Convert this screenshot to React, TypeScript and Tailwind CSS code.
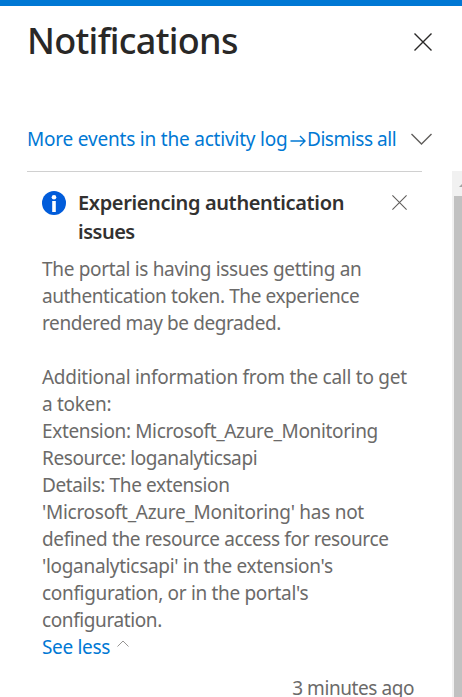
import { useState } from 'react';
import clsx from 'clsx';

interface TextLine {
  text: string;
  tracking: string;
}

const LINES: TextLine[] = [
  { text: 'The portal is having issues getting an', tracking: 'tracking-[-0.33px]' },
  { text: 'authentication token. The experience', tracking: 'tracking-[-0.4px]' },
  { text: 'rendered may be degraded.', tracking: 'tracking-[-0.4px]' },
  { text: '', tracking: '' },
  { text: 'Additional information from the call to get', tracking: 'tracking-[-0.27px]' },
  { text: 'a token:', tracking: 'tracking-[-0.3px]' },
  { text: 'Extension: Microsoft_Azure_Monitoring', tracking: 'tracking-[-0.36px]' },
  { text: 'Resource: loganalyticsapi', tracking: 'tracking-[-0.4px]' },
  { text: 'Details: The extension', tracking: 'tracking-[-0.38px]' },
  { text: "'Microsoft_Azure_Monitoring' has not", tracking: 'tracking-[-0.28px]' },
  { text: 'defined the resource access for resource', tracking: 'tracking-[-0.37px]' },
  { text: "'loganalyticsapi' in the extension's", tracking: 'tracking-[-0.31px]' },
  { text: "configuration, or in the portal's", tracking: 'tracking-[-0.32px]' },
  { text: 'configuration.', tracking: 'tracking-[-0.4px]' },
];

const CloseIcon = ({ className }: { className: string }) => (
  <svg viewBox="0 0 18 18" fill="none" stroke="currentColor" className={className}>
    <path d="M.5.5l17 17M17.5.5l-17 17" />
  </svg>
);

const Header = () => (
  <header className="flex h-[66px] items-start justify-between pt-[7px] pr-[30px] pl-[27px]">
    <h1 className="text-[36px] leading-[56px] font-medium tracking-[-0.7px] whitespace-nowrap text-[#292827]">
      Notifications
    </h1>
    <button type="button" aria-label="Close" className="mt-5">
      <CloseIcon className="size-[18px] stroke-[1.4] text-[#292827]" />
    </button>
  </header>
);

const Toolbar = () => (
  <div className="mt-[51px] flex h-8 items-center pl-[27px] text-[19px] whitespace-nowrap text-[#0078d4]">
    <a href="#" className="w-[263px] tracking-[-0.2px]">More events in the activity log</a>
    <svg width="16" height="12" viewBox="0 0 16 12" fill="none" stroke="currentColor" strokeWidth="1.4" className="mt-1">
      <path d="M.5 6h14.5M10 1l5 5-5 5" />
    </svg>
    <a href="#" className="ml-px w-[105px] tracking-[-0.45px]">Dismiss all</a>
    <svg width="21" height="12" viewBox="0 0 21 12" fill="none" stroke="#605e5c" strokeWidth="1.4" className="-ml-px">
      <path d="M.5 1l10 10 10-10" />
    </svg>
  </div>
);

const InfoIcon = () => (
  <svg width="24" height="24" viewBox="0 0 24 24" className="mt-[3px] shrink-0">
    <circle cx="12" cy="12" r="12" fill="#015cda" />
    <circle cx="12" cy="6.2" r="2.3" fill="#fff" />
    <path d="M10.2 10h3.6v11h-3.6z" fill="#fff" />
  </svg>
);

const App = () => {
  const [expanded, setExpanded] = useState(true);

  return (
    <main className="h-[697px] w-[462px] overflow-hidden border-t-[6px] border-[#0078d4] bg-white font-['Noto_Sans','Open_Sans',sans-serif]">
      <Header />
      <Toolbar />
      <div className="mt-4 flex h-[526px]">
        <div className="ml-[27px] w-[395px] border-t border-[#d0d0d0] pl-[15px]">
          <div className="flex h-[84px] items-start pt-4">
            <InfoIcon />
            <h2 className="ml-3 w-[314px] text-[20px] leading-[29px] font-semibold whitespace-nowrap text-[#323130]">
              <span className="block tracking-[-0.36px]">Experiencing authentication</span>
              <span className="block tracking-[-0.5px]">issues</span>
            </h2>
            <button type="button" aria-label="Dismiss" className="mt-[7px] shrink-0">
              <CloseIcon className="size-[15px] stroke-[1.3] text-[#605e5c]" />
            </button>
          </div>
          <div className="text-[19px] leading-[27px] whitespace-nowrap text-[#6b6a69]">
            {expanded && LINES.map((line, i) => (
              <p key={i} className={clsx('h-[27px]', line.tracking)}>{line.text}</p>
            ))}
            <button
              type="button"
              onClick={() => setExpanded(!expanded)}
              className="flex h-[27px] items-center text-[#0078d4]"
            >
              <span className="w-[75px] text-left tracking-[-0.32px]">See less</span>
              <svg width="12" height="7" viewBox="0 0 12 7" fill="none" stroke="#979593" className="-mt-2">
                <path d="M.5 6.5L6 1l5.5 5.5" />
              </svg>
            </button>
            <p className="mt-[19px] pr-2 text-right leading-[17px] tracking-[-0.43px]">3 minutes ago</p>
          </div>
        </div>
        <div className="ml-[30px] w-[10px] overflow-hidden bg-[#f1f1f1]">
          <div className="flex h-[25px] items-center pl-[7px]">
            <svg width="8" height="4" viewBox="0 0 8 4" className="mt-[3px] shrink-0" fill="#a3a3a3">
              <path d="M0 4l4-4 4 4z" />
            </svg>
          </div>
          <div className="ml-0.5 h-[501px] bg-[#c1c1c1]" />
        </div>
      </div>
    </main>
  );
};

export default App;
